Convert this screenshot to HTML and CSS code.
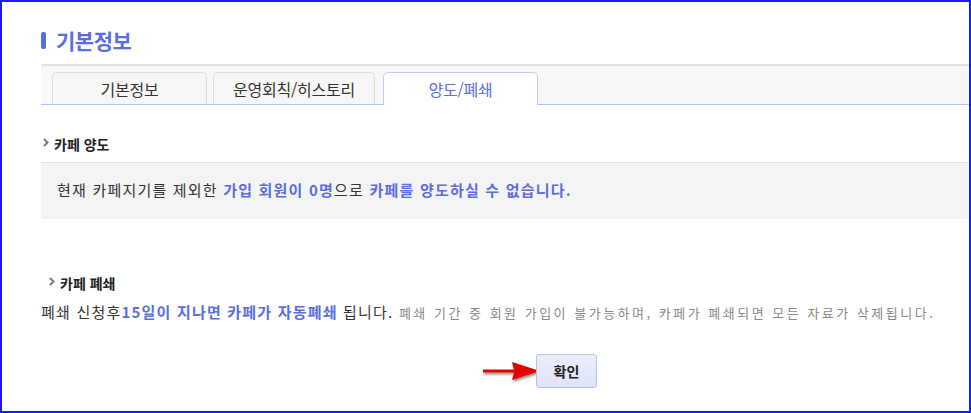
FILE: index.html
```html
<!DOCTYPE html>
<html lang="ko">
<head>
    <meta charset="UTF-8">
    <title>기본정보</title>
    <link rel="stylesheet" href="styles.css">
</head>
<body>
    <div class="frame">
        <div class="content">
            <h1 class="page-title"><span class="title-bar"></span>기본정보</h1>

            <div class="tab-strip">
                <div class="tab tab-1">기본정보</div>
                <div class="tab tab-2">운영회칙/히스토리</div>
                <div class="tab tab-3 active">양도/폐쇄</div>
            </div>

            <h2 class="section-title">
                <svg class="chev" width="6" height="9" viewBox="0 0 6 9"><path d="M1 1 L4.5 4.5 L1 8" fill="none" stroke="#7a7a7a" stroke-width="2"/></svg>
                카페 양도
            </h2>
            <div class="notice-box">
                현재 카페지기를 제외한 <span class="hl">가입 회원이 <b>0</b>명</span>으로 <span class="hl">카페를 양도하실 수 없습니다.</span>
            </div>

            <h2 class="section-title close-title">
                <svg class="chev" width="6" height="9" viewBox="0 0 6 9"><path d="M1 1 L4.5 4.5 L1 8" fill="none" stroke="#7a7a7a" stroke-width="2"/></svg>
                카페 폐쇄
            </h2>
            <p class="close-desc">폐쇄 신청후<b class="hl">15</b><span class="hl">일이 지나면 카페가 자동폐쇄</span> 됩니다. <span class="muted">폐쇄 기간 중 회원 가입이 불가능하며, 카페가 폐쇄되면 모든 자료가 삭제됩니다.</span></p>

            <div class="actions">
                <svg class="arrow" width="62" height="26" viewBox="0 0 62 26">
                    <defs>
                        <filter id="sh" x="-20%" y="-40%" width="140%" height="180%">
                            <feDropShadow dx="1" dy="2" stdDeviation="1.3" flood-color="#000" flood-opacity="0.45"/>
                        </filter>
                    </defs>
                    <g filter="url(#sh)">
                        <path d="M1 10.5 L32 10.5 L30 3 L58 12 L30 21 L32 13.5 L1 13.5 Z" fill="#e60000"/>
                    </g>
                </svg>
                <button class="btn-ok">확인</button>
            </div>
        </div>
    </div>
</body>
</html>
```

FILE: styles.css
```css
* {
    box-sizing: border-box;
}
body {
    margin: 0;
    font-family: "Noto Sans CJK KR", "Noto Sans", sans-serif;
    color: #333;
}
.frame {
    width: 971px;
    height: 413px;
    border: 2px solid #1a1aff;
    background: #fff;
    overflow: hidden;
}
.content {
    padding: 21px 0 0 39px;
}
.page-title {
    margin: 0;
    display: flex;
    align-items: center;
    font-size: 21px;
    font-weight: bold;
    color: #5a6ee0;
    height: 34px;
    letter-spacing: -0.5px;
}
.title-bar {
    width: 5px;
    height: 17px;
    background: #5a6ee0;
    border-radius: 2px;
    margin-right: 10px;
}
.tab-strip {
    margin-top: 7px;
    border-top: 2px solid #e2e2e2;
    border-bottom: 1px solid #b6c2f0;
    background: #f8f8f8;
    height: 41px;
    display: flex;
    align-items: flex-end;
    padding-left: 11px;
}
.tab {
    height: 32px;
    border: 1px solid #dcdcdc;
    border-bottom: none;
    border-radius: 5px 5px 0 0;
    background: #f7f7f7;
    font-size: 16px;
    letter-spacing: -0.2px;
    color: #333;
    display: flex;
    align-items: center;
    justify-content: center;
    margin-right: 6px;
}
.tab-1 {
    width: 155px;
}
.tab-2 {
    width: 162px;
    margin-right: 8px;
}
.tab-3 {
    width: 155px;
}
.tab.active {
    background: #fff;
    border-color: #c2cbf2;
    color: #5a6ee0;
    height: 33px;
    margin-bottom: -1px;
}
.section-title {
    margin: 29px 0 0 2px;
    font-size: 14px;
    font-weight: bold;
    color: #222;
    display: flex;
    align-items: center;
    height: 20px;
}
.chev {
    margin-right: 5px;
    margin-top: -3px;
}
.notice-box {
    margin-top: 8px;
    border-top: 1px solid #e4e4e4;
    background: #f4f4f4;
    height: 57px;
    padding: 16px 0 0 16px;
    font-size: 15px;
    letter-spacing: 1.2px;
    color: #333;
}
.hl {
    color: #5a6ee0;
    font-weight: bold;
}
.notice-box b {
    font-weight: bold;
}
.close-title {
    margin-top: 54px;
    margin-left: 8px;
}
.close-desc {
    margin: 8px 0 0 0;
    font-size: 15px;
    letter-spacing: 1.2px;
    color: #333;
}
.muted {
    color: #888;
    font-size: 13px;
    letter-spacing: 2.5px;
}
.actions {
    margin-top: 32px;
    margin-left: 441px;
    display: flex;
    align-items: center;
}
.arrow {
    margin-right: -8px;
    margin-top: 2px;
}
.btn-ok {
    width: 61px;
    height: 34px;
    background: linear-gradient(#eceefc, #dfe3f8);
    border: 1px solid #b8c0ea;
    border-radius: 3px;
    font-family: "Noto Sans CJK KR", sans-serif;
    font-size: 14px;
    font-weight: bold;
    color: #222;
    padding: 0;
}
```
